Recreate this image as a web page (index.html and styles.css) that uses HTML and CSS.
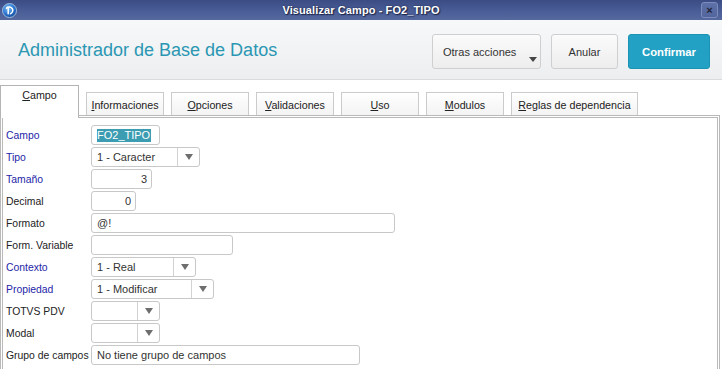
FILE: index.html
```html
<!DOCTYPE html>
<html lang="es">
<head>
<meta charset="utf-8">
<title>Visualizar Campo - FO2_TIPO</title>
<link rel="stylesheet" href="styles.css">
</head>
<body>
<div class="window">
  <div class="titlebar">
    <div class="tb-left">
      <svg class="logo" width="15" height="15" viewBox="0 0 15 15">
        <defs>
          <radialGradient id="lg" cx="0.4" cy="0.35" r="0.7">
            <stop offset="0" stop-color="#7fc0f2"/>
            <stop offset="0.6" stop-color="#2a74d0"/>
            <stop offset="1" stop-color="#14458f"/>
          </radialGradient>
        </defs>
        <circle cx="7.5" cy="7.5" r="7" fill="url(#lg)" stroke="#b9d4ef" stroke-width="0.8"/>
        <path d="M4.5 5.2 C5.5 3.8 8.5 3.6 10.2 5.4 C11.4 6.8 10.8 9.6 8.6 10.6" fill="none" stroke="#ffffff" stroke-width="1.5" stroke-linecap="round"/>
        <path d="M6.2 5.6 L6.2 10.8" fill="none" stroke="#ffffff" stroke-width="1.5" stroke-linecap="round"/>
      </svg>
    </div>
    <div class="tb-title">Visualizar Campo - FO2_TIPO</div>
    <div class="tb-right"><span class="close">&#215;</span></div>
  </div>

  <header class="header">
    <h1 class="app-title">Administrador de Base de Datos</h1>
    <div class="actions">
      <button class="btn btn-menu">Otras acciones<span class="caret"></span></button>
      <button class="btn btn-cancel">Anular</button>
      <button class="btn btn-primary">Confirmar</button>
    </div>
  </header>

  <nav class="tabs">
    <div class="tab active"><u>C</u>ampo</div>
    <div class="tab"><u>I</u>nformaciones</div>
    <div class="tab"><u>O</u>pciones</div>
    <div class="tab"><u>V</u>alidaciones</div>
    <div class="tab"><u>U</u>so</div>
    <div class="tab"><u>M</u>odulos</div>
    <div class="tab tab-wide"><u>R</u>eglas de dependencia</div>
  </nav>

  <section class="panel">
    <div class="form">
      <label class="lbl req">Campo</label>
      <div class="field w-campo"><span class="selected">FO2_TIPO</span></div>

      <label class="lbl req">Tipo</label>
      <div class="field select w-tipo"><span class="sel-text">1 - Caracter</span><span class="sel-btn"><i class="tri"></i></span></div>

      <label class="lbl req">Tamaño</label>
      <div class="field num w-tam">3</div>

      <label class="lbl">Decimal</label>
      <div class="field num w-dec">0</div>

      <label class="lbl">Formato</label>
      <div class="field w-fmt">@!</div>

      <label class="lbl">Form. Variable</label>
      <div class="field w-fvar"></div>

      <label class="lbl req">Contexto</label>
      <div class="field select w-ctx"><span class="sel-text">1 - Real</span><span class="sel-btn"><i class="tri"></i></span></div>

      <label class="lbl req">Propiedad</label>
      <div class="field select w-prop"><span class="sel-text">1 - Modificar</span><span class="sel-btn"><i class="tri"></i></span></div>

      <label class="lbl">TOTVS PDV</label>
      <div class="field select w-small"><span class="sel-text"></span><span class="sel-btn"><i class="tri"></i></span></div>

      <label class="lbl">Modal</label>
      <div class="field select w-small"><span class="sel-text"></span><span class="sel-btn"><i class="tri"></i></span></div>

      <label class="lbl">Grupo de campos</label>
      <div class="field w-grupo">No tiene grupo de campos</div>
    </div>
  </section>
</div>
</body>
</html>
```

FILE: styles.css
```css
* { box-sizing: border-box; }

html, body {
  margin: 0;
  padding: 0;
  background: #ffffff;
  overflow: hidden;
  font-family: "Liberation Sans", Arial, sans-serif;
}

.window {
  width: 722px;
  height: 369px;
  overflow: hidden;
  background: #ffffff;
}

/* ---------- title bar ---------- */
.titlebar {
  height: 20px;
  display: grid;
  grid-template-columns: 1fr auto 1fr;
  align-items: center;
  background: linear-gradient(180deg, #3b4c84 0%, #4a5d97 55%, #55699f 100%);
}

.tb-left { padding-left: 2px; display: flex; align-items: center; }
.logo { display: block; }

.tb-title {
  color: #ffffff;
  font-weight: bold;
  font-size: 11px;
  text-shadow: 0 0 2px #1d2648, 1px 1px 1px #1d2648;
  letter-spacing: 0.1px;
}

.tb-right { display: flex; justify-content: flex-end; padding-right: 4px; }

.close {
  width: 17px;
  height: 16px;
  border: 1px solid #7c8cbc;
  border-radius: 3px;
  background: linear-gradient(180deg, #5d70a8, #52659d);
  color: #1f2436;
  font-size: 11px;
  font-weight: bold;
  line-height: 14px;
  text-align: center;
}

/* ---------- header ---------- */
.header {
  height: 60px;
  padding: 4px 12px 0 18px;
  display: flex;
  align-items: center;
  justify-content: space-between;
  background: linear-gradient(180deg, #f7f8f9 0%, #eceef0 100%);
  border-bottom: 1px solid #d9dbdd;
}

.app-title {
  margin: -3px 0 0 0;
  font-size: 18px;
  font-weight: normal;
  color: #2b97b3;
}

.actions { display: flex; gap: 10px; }

.btn {
  position: relative;
  height: 35px;
  padding: 0;
  border: 1px solid #cfcfcf;
  border-radius: 3px;
  background: linear-gradient(180deg, #fbfbfb 0%, #ededed 100%);
  font-family: "Liberation Sans", Arial, sans-serif;
  font-size: 11px;
  color: #333333;
  white-space: nowrap;
}

.btn-menu { width: 109px; padding: 0 0 0 10px; text-align: left; }
.btn-cancel { width: 67px; }
.btn-primary {
  width: 82px;
  background: #22a1c4;
  border-color: #1c93b4;
  color: #ffffff;
  font-weight: bold;
  font-size: 11.3px;
}

.caret {
  position: absolute;
  right: 3px;
  bottom: 6px;
  width: 0;
  height: 0;
  border-left: 4.5px solid transparent;
  border-right: 4.5px solid transparent;
  border-top: 5px solid #454545;
}

/* ---------- tabs ---------- */
.tabs {
  height: 35px;
  padding-top: 5px;
  display: flex;
  align-items: flex-end;
  gap: 7px;
}

.tab {
  width: 78px;
  height: 23px;
  padding-top: 6px;
  border: 1px solid #cbcbcb;
  border-bottom: none;
  background: linear-gradient(180deg, #ffffff 0%, #f3f3f3 100%);
  font-size: 10.7px;
  line-height: 13px;
  color: #222222;
  text-align: center;
  white-space: nowrap;
}

.tab-wide { width: 127px; }

.tab.active {
  position: relative;
  z-index: 1;
  width: 79px;
  height: 33px;
  margin-bottom: -3px;
  padding-top: 3px;
  border-color: #b4b4b4;
  background: #ffffff;
}

/* ---------- panel ---------- */
.panel {
  height: 270px;
  margin-right: 2px;
  border: 3px double #b9b9b9;
  background: #ffffff;
}

.form {
  padding: 7px 0 0 3px;
  display: grid;
  grid-template-columns: 85px auto;
  row-gap: 2px;
  align-items: center;
  justify-items: start;
}

.lbl {
  font-size: 10.4px;
  color: #222222;
  white-space: nowrap;
}

.lbl.req { color: #2525a8; }

.field {
  height: 20px;
  border: 1px solid #c8c8c8;
  border-radius: 3px;
  background: #ffffff;
  padding: 0 4px 0 5px;
  display: flex;
  align-items: center;
  font-size: 11px;
  color: #333333;
  white-space: nowrap;
  overflow: hidden;
}

.field.num { justify-content: flex-end; }

.field.select { padding: 0 0 0 5px; }
.sel-text { flex: 1; }
.sel-btn {
  width: 22px;
  height: 100%;
  border-left: 1px solid #d2d2d2;
  display: flex;
  align-items: center;
  justify-content: center;
}
.tri {
  width: 0;
  height: 0;
  border-left: 4px solid transparent;
  border-right: 4px solid transparent;
  border-top: 6px solid #6e6e6e;
}

.selected {
  background: #3b9cb2;
  color: #ffffff;
  line-height: 13px;
  padding-right: 1px;
}

.w-campo { width: 69px; }
.w-tipo  { width: 109px; }
.w-tam   { width: 61px; }
.w-dec   { width: 45px; }
.w-fmt   { width: 304px; }
.w-fvar  { width: 142px; }
.w-ctx   { width: 105px; }
.w-prop  { width: 123px; }
.w-small { width: 69px; }
.w-grupo { width: 269px; }
```
